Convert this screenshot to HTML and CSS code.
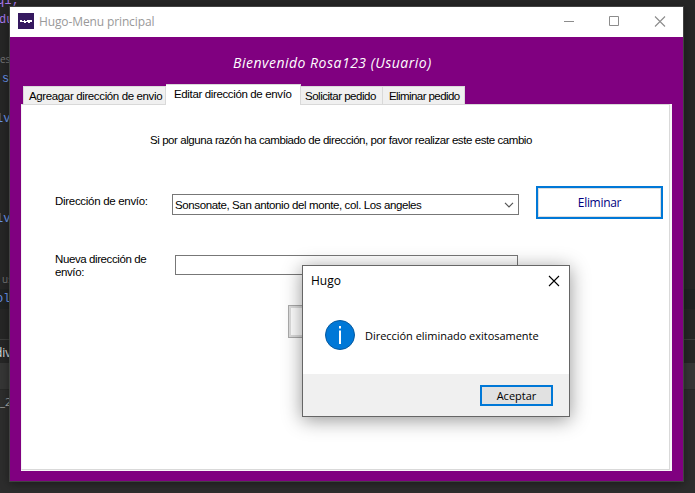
FILE: index.html
```html
<!DOCTYPE html>
<html lang="es">
<head>
<meta charset="utf-8">
<title>Hugo-Menu principal</title>
<link rel="stylesheet" href="styles.css">
</head>
<body>
<div class="desktop">
  <div class="editor">
    <div class="line purple">q1;</div>
    <div class="line purple up">du:</div>
    <div class="line"></div>
    <div class="line hint">es</div>
    <div class="line blue indent">st</div>
    <div class="line"></div>
    <div class="line blue shift">lva</div>
    <div class="line"></div>
    <div class="line"></div>
    <div class="line"></div>
    <div class="line"></div>
    <div class="line blue shift">lva</div>
    <div class="line"></div>
    <div class="line"></div>
    <div class="line hint indent">us</div>
    <div class="line blue shift current">ol</div>
    <div class="line"></div>
    <div class="tool-head">div</div>
    <div class="tool-bar"></div>
    <div class="tool-body">_2</div>
  </div>

  <main class="window">
    <header class="titlebar">
      <span class="app-icon"><svg width="16" height="16" viewBox="0 0 16 16"><path d="M2 7h2v1h2V7h1v1h2V7h5v2h-2v1h-2V9H8v1H6V9H2z" fill="#fff"/></svg></span>
      <span class="title">Hugo-Menu principal</span>
      <svg class="caption" width="104" height="12" viewBox="0 0 104 12" fill="none" stroke="#8c8c8c">
        <path d="M1 6.500h10M46.500 1.500h9v9h-9z"/><path d="M92 1.500l10 10M102 1.500l-10 10" stroke-width="1.100"/>
      </svg>
    </header>
    <h1 class="welcome">Bienvenido Rosa123 (Usuario)</h1>
    <nav class="tabs">
      <span class="tab t1">Agreagar dirección de envio</span>
      <span class="tab t2 active">Editar dirección de envío</span>
      <span class="tab t3">Solicitar pedido</span>
      <span class="tab t4">Eliminar pedido</span>
    </nav>
    <section class="page">
      <div class="sheet">
        <p class="intro">Si por alguna razón ha cambiado de dirección, por favor realizar este este cambio</p>
        <div class="row first">
          <label class="label one">Dirección de envío:</label>
          <div class="combo"><span>Sonsonate, San antonio del monte, col. Los angeles</span>
            <svg width="10" height="6" viewBox="0 0 10 6"><path d="M1 .8l4 4 4-4" fill="none" stroke="#555" stroke-width="1.200"/></svg>
          </div>
          <div class="button remove">Eliminar</div>
        </div>
        <div class="row second">
          <label class="label two">Nueva dirección de<br>envío:</label>
          <div class="field"></div>
        </div>
        <div class="button update"></div>
      </div>
    </section>
  </main>

  <div class="dialog">
    <div class="dialog-head"><span>Hugo</span>
      <svg width="12" height="12" viewBox="0 0 12 12"><path d="M1 1l10 10M11 1L1 11" stroke="#000" stroke-width="1.100"/></svg>
    </div>
    <div class="dialog-body">
      <svg width="30" height="30" viewBox="0 0 30 30"><circle cx="15" cy="15" r="14.500" fill="#0078d7" stroke="#075a9f"/><path d="M15 6v2.500M15 10.500v13.500" stroke="#fff" stroke-width="2"/></svg>
      <span>Dirección eliminado exitosamente</span>
    </div>
    <div class="dialog-foot"><div class="accept">Aceptar</div></div>
  </div>
</div>
</body>
</html>
```
FILE: styles.css
```css
* { box-sizing: border-box; }
body { margin: 0; font: 11.5px/14px "Liberation Sans", sans-serif; color: #000; }
.desktop { position: relative; width: 695px; height: 493px; overflow: hidden; background: #262626; }

.editor { margin-top: -11px; font: 12px/20px "Liberation Mono", monospace; }
.line { height: 20px; white-space: pre; }
.line:first-child { padding-top: 2px; text-indent: -3px; }
.up { padding-top: 1px; text-indent: -1px; }
.purple { color: #a878ee; }
.blue { color: #6a93e8; line-height: 21px; }
.hint { color: #777; font: 10px/21px "Open Sans", sans-serif; }
.indent { padding-left: 2px; }
.shift { text-indent: -4px; }
.current { background: #202323; }
.tool-head { height: 24px; margin-top: 10px; border-top: 1px solid #3c3c3c; color: #ddd; font: 12px/25px "Open Sans", sans-serif; text-indent: -5px; }
.tool-bar { height: 27px; background: #363636; border-bottom: 1px solid #292929; }
.tool-body { height: 104px; background: #2d2d2d; color: #aaa; font: 11.5px/24px "Open Sans", sans-serif; }

.window { position: absolute; left: 9px; top: 6px; width: 675px; height: 476px; display: flex; flex-direction: column; border: 1px solid #424242; background: #800080; box-shadow: 0 2px 9px rgba(0,0,0,.4); }
.titlebar { display: flex; align-items: center; height: 30px; background: #fff; padding: 0 16px 2px 8px; }
.app-icon { width: 16px; height: 16px; background: #35195f; }
.title { flex: 1; margin: 2px 0 0 5px; font: 12px/16px "Open Sans", sans-serif; letter-spacing: -.12px; color: #999; }
.caption { flex: none; }
.welcome { margin: 16px 0 0 223px; height: 31px; font: italic 500 14px/20px "Segoe Script", "Ink Free", "Comic Sans MS", "Open Sans", sans-serif; letter-spacing: .5px; color: #fff; white-space: nowrap; }
.tabs { position: relative; z-index: 1; display: flex; align-items: flex-end; height: 21px; margin-left: 13px; }
.tab { height: 19px; padding: 2px 0 0 5px; background: #f0f0f0; border: 1px solid #d9d9d9; border-left: 0; white-space: nowrap; }
.t1 { width: 143px; border-left: 1px solid #d9d9d9; letter-spacing: -.37px; }
.t2 { width: 135px; letter-spacing: -.36px; }
.t3 { width: 82px; padding-left: 4px; letter-spacing: -.49px; }
.t4 { width: 82px; padding-left: 6px; letter-spacing: -.58px; }
.tab.active { height: 21px; padding: 2px 0 0 8px; background: #fff; border-bottom: 0; }

.page { width: 651px; height: 367px; margin: -1px 0 0 11px; padding-right: 2px; padding-bottom: 1px; background: #f7f7f7; }
.sheet { height: 366px; background: #fff; border: 1px solid #d9d9d9; border-left-color: #f4f4f4; overflow: hidden; }
.intro { margin: 28px 0 0 128px; line-height: 14px; letter-spacing: -.43px; white-space: nowrap; }
.row { display: flex; align-items: flex-start; margin-left: 33px; }
.label { line-height: 13px; white-space: nowrap; }
.first { margin-top: 39px; }
.one { width: 117px; padding-top: 9px; letter-spacing: -.3px; }
.combo { width: 347px; height: 21px; margin-top: 8px; padding: 0 4px 0 2px; display: flex; align-items: center; justify-content: space-between; border: 1px solid #777; letter-spacing: -.39px; white-space: nowrap; }
.button { border: 2px solid #0078d7; box-shadow: inset 0 0 0 1px #ddd; }
.remove { width: 127px; height: 33px; margin-left: 17px; text-align: center; font: 12px/29px "Open Sans", sans-serif; letter-spacing: -.3px; color: #000080; }
.second { margin-top: 34px; }
.two { width: 120px; letter-spacing: -.4px; }
.field { width: 343px; height: 20px; margin-top: 2px; border: 1px solid #777; }
.update { width: 127px; height: 33px; margin: 26px 0 0 266px; border: 1px solid #aaa; box-shadow: inset 0 0 0 2px #ddd; }

.dialog { position: absolute; left: 302px; top: 265px; width: 268px; height: 152px; display: flex; flex-direction: column; border: 1px solid #666; background: #fff; box-shadow: 0 3px 18px rgba(0,0,0,.42); font-family: "Open Sans", sans-serif; }
.dialog-head { display: flex; justify-content: space-between; align-items: center; height: 30px; padding: 0 9px 1px 8px; font-size: 12px; }
.dialog-head span { margin-top: 1px; }
.dialog-body { flex: 1; display: flex; align-items: center; padding: 0 0 0 22px; }
.dialog-body span { margin: 2px 0 0 10px; font-size: 11px; letter-spacing: -.03px; white-space: nowrap; }
.dialog-foot { display: flex; justify-content: flex-end; height: 42px; padding: 11px 16px 0; background: #f0f0f0; }
.accept { width: 73px; height: 21px; border: 2px solid #0078d7; background: #e1e1e1; text-align: center; font-size: 11px; line-height: 18px; }
```
